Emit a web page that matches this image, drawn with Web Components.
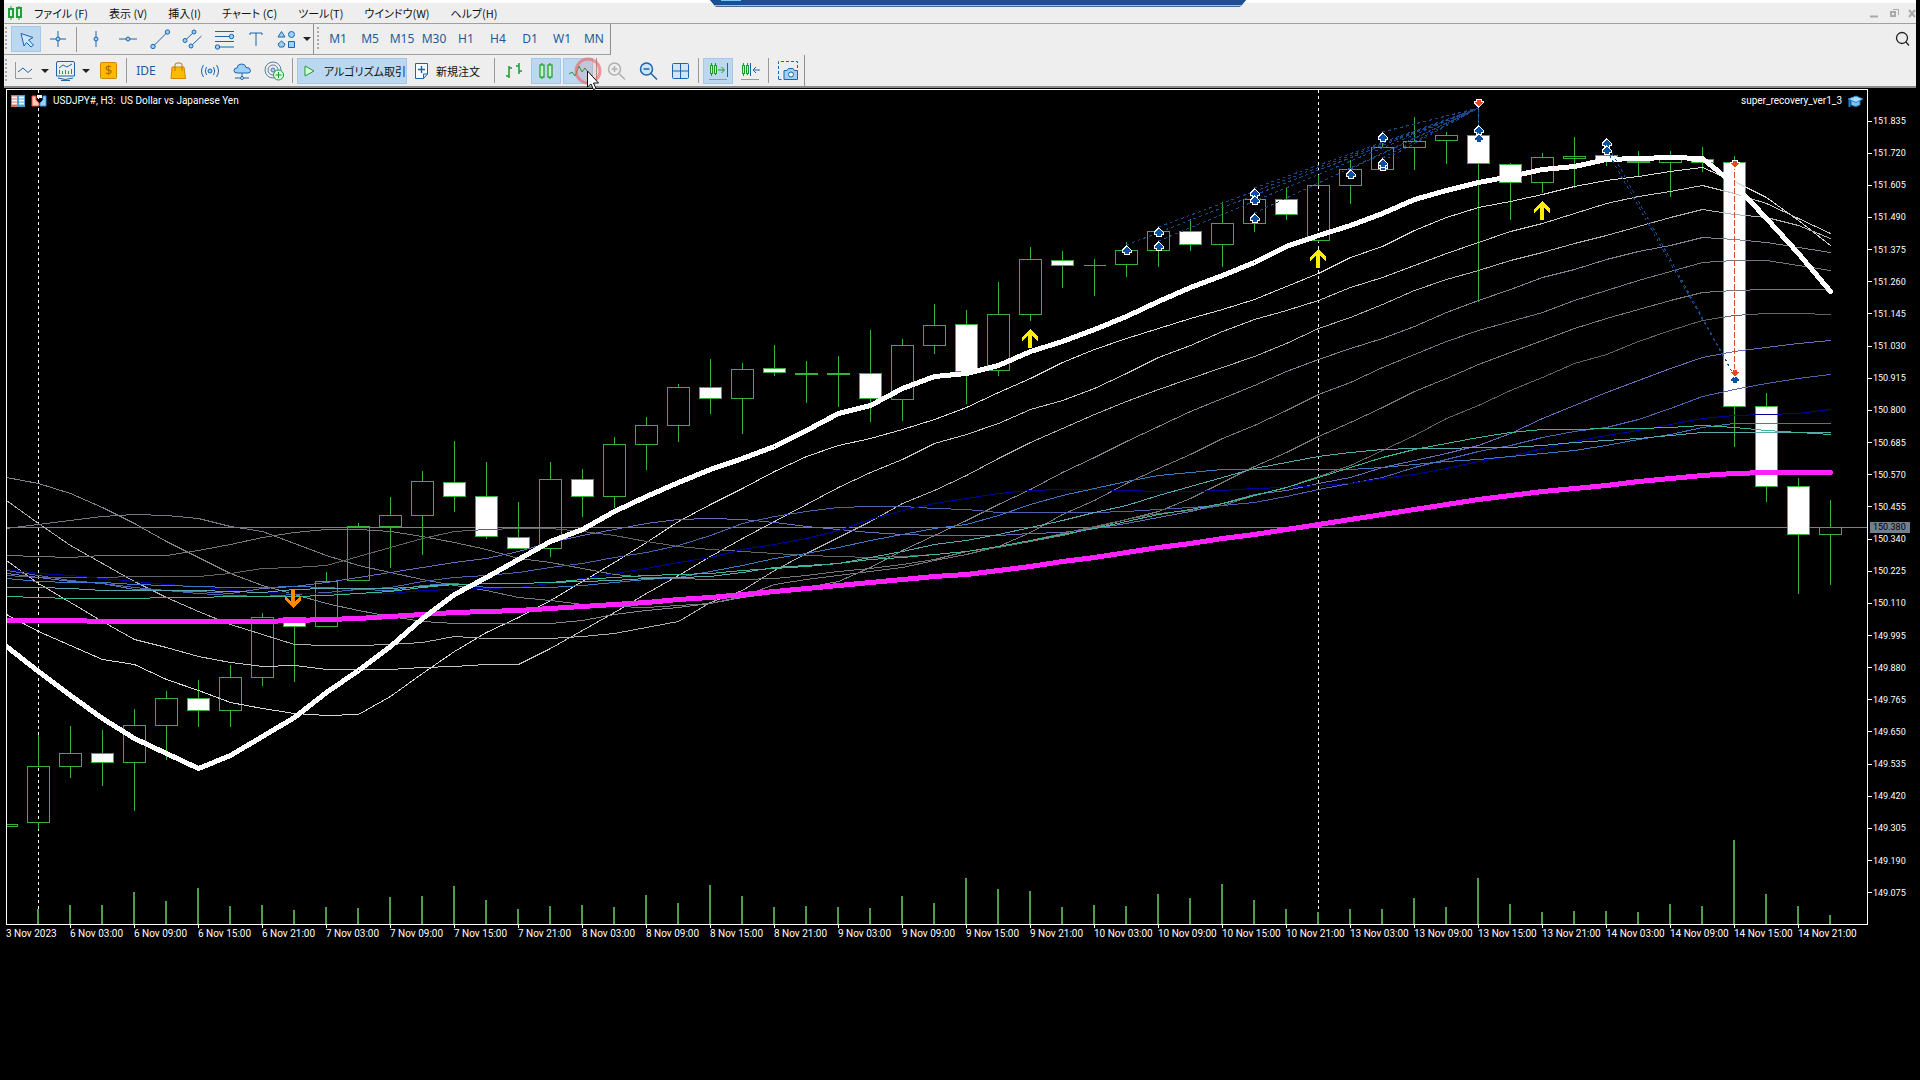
<!DOCTYPE html>
<html lang="ja">
<head>
    <meta charset="utf-8">
    <title>USDJPY#, H3</title>
    <meta name="viewport" content="width=device-width, initial-scale=1">
    <style>
        body {
            margin: 0;
            background: #000;
            font-family: "Liberation Sans", "Noto Sans CJK JP", sans-serif;
            font-size: 11px;
        }
        main {
            padding: 0 4px;
        }
    </style>
</head>

<body>
    <template id="menu-bar">
        <style>
            :host {
                display: flex;
                align-items: center;
                height: 20px;
                border-top: 3px solid #fff;
                border-bottom: 1px solid #a0a0a0;
                background: #eee;
                color: #111;
            }
            nav {
                display: flex;
                flex: 1;
                gap: 21px;
                margin-left: 12px;
            }
            button {
                padding: 0;
                border: 0;
                background: none;
                color: inherit;
                font: 11px/18px "Noto Sans CJK JP", sans-serif;
                font-feature-settings: "palt";
                white-space: pre;
            }
            svg {
                display: block;
            }
            .logo {
                margin-left: 4px;
            }
            .controls {
                display: flex;
                gap: 8px;
            }
        </style>
        <svg class="logo" width="14" height="16" viewBox="0 0 14 16" fill="none" stroke="#1fa03a" stroke-width="2">
            <path d="M3 1V4M3 12V15M11 1V3M11 12V15" stroke-width="1"/>
            <rect x="1" y="4" width="4" height="8"/>
            <rect x="9" y="3" width="4" height="9"/>
        </svg>
        <nav></nav>
        <div class="controls">
            <button aria-label="最小化"><svg width="12" height="12"><path d="M2 9.5H10" stroke="#aaa" stroke-width="2"/></svg></button>
            <button aria-label="元に戻す"><svg width="12" height="12" fill="none" stroke="#aaa"><rect x="3" y="5" width="4" height="4" stroke-width="2"/><path d="M5 2.5H10.5V8"/></svg></button>
            <button aria-label="閉じる"><svg width="8" height="12" fill="none" stroke="#aaa" stroke-width="2"><path d="M1 3L7 10M7 3L1 10"/></svg></button>
        </div>
    </template>

    <template id="tool-bar">
        <style>
            :host {
                display: flex;
                align-items: stretch;
                height: 31px;
                background: #eee;
            }
            :host([last]) {
                border-bottom: 2px solid #8a8a8a;
            }
            ::slotted(.end) {
                margin-left: auto;
                padding-top: 2px;
            }
        </style>
        <slot></slot>
    </template>

    <template id="tool-group">
        <style>
            :host {
                display: flex;
                align-items: center;
                box-sizing: border-box;
                border-right: 1px solid #909090;
                border-bottom: 1px solid #a0a0a0;
            }
            :host([flat]) {
                border-bottom: 0;
            }
            .grip {
                width: 2px;
                height: 24px;
                margin: 0 3px 0 1px;
                background: repeating-linear-gradient(#aaa 0 2px, transparent 2px 4px);
            }
            :host([wide]) .grip {
                margin: 0 3px;
            }
        </style>
        <div class="grip"></div>
        <slot></slot>
    </template>

    <template id="tool-button">
        <style>
            :host {
                display: block;
            }
            button {
                display: flex;
                align-items: center;
                justify-content: center;
                box-sizing: border-box;
                min-width: 30px;
                height: 26px;
                margin: 0 1px;
                padding: 0;
                border: 1px solid transparent;
                background: none;
                color: #1c5a9c;
                font: 12px/16px "Noto Sans", sans-serif;
            }
            button[aria-pressed="true"] {
                border-color: #a2c9ec;
                background: #bbd8f0;
            }
            :host([wide]) button {
                justify-content: flex-start;
                min-width: 82px;
                color: #111;
                font: 11px/16px "Noto Sans CJK JP", sans-serif;
                font-feature-settings: "palt";
            }
            :host([wide]) button svg {
                margin-right: 2px;
            }
            svg {
                display: block;
                flex: none;
            }
            .caret {
                display: none;
                width: 0;
                margin-left: 5px;
                border: 4px solid transparent;
                border-top: 4px solid #222;
                border-bottom: 0;
            }
            :host([menu]) .caret {
                display: block;
            }
        </style>
        <button><slot></slot><span class="caret"></span></button>
    </template>

    <template id="tool-separator">
        <style>
            :host {
                width: 1px;
                height: 25px;
                margin: 0 3px 0 2px;
                background: #999;
            }
        </style>
    </template>

    <template id="price-chart">
        <style>
            :host {
                display: grid;
                grid-template-columns: 1fr 48px;
                margin: 1px 0 0 2px;
                color: #fff;
                font: 10px/16px Roboto, sans-serif;
            }
            .plot {
                display: grid;
                border: 1px solid #fff;
            }
            .plot > * {
                grid-area: 1 / 1;
            }
            .canvas {
                display: block;
                width: 100%;
            }
            header {
                display: flex;
                align-items: center;
                align-self: start;
                gap: 6px;
                height: 22px;
                padding: 0 4px;
                z-index: 1;
            }
            header .expert {
                margin-left: auto;
            }
            header svg {
                display: block;
            }
            .prices {
                position: relative;
                display: flex;
                flex-direction: column;
                justify-content: space-between;
                padding: 24px 0;
                font-size: 9px;
            }
            .prices span {
                display: flex;
                align-items: center;
                gap: 1px;
            }
            .prices span::before {
                content: "";
                width: 4px;
                height: 1px;
                background: #fff;
            }
            .prices output {
                position: absolute;
                top: calc(52% - 2px);
                left: 2px;
                padding: 0 4px 0 3px;
                background: #708090;
                color: #000;
                line-height: 11px;
            }
            .times {
                display: grid;
                grid-auto-flow: column;
                grid-auto-columns: 1fr;
                padding-right: 6px;
                white-space: nowrap;
            }
            .times span::before {
                content: "";
                display: block;
                width: 1px;
                height: 3px;
                margin-bottom: -2px;
                background: #fff;
            }
            .times span:first-child::before {
                background: none;
            }
        </style>
        <div class="plot">
            <svg class="canvas" viewBox="7 90 1860 834" fill="none" shape-rendering="crispEdges"></svg>
            <header>
                <svg width="14" height="12"><path d="M0 0H7V12H0z" fill="#e06a5a"/><path d="M7 0H14V12H7z" fill="#4aa0e0"/><path d="M1 2.5H6M1 5.5H6M1 8.5H6M8 2.5H13M8 5.5H13M8 8.5H13" stroke="#fff" stroke-width="2"/></svg>
                <svg width="16" height="12"><path d="M1 1H5V5L8 8V11H1z" fill="#ffc8b8" stroke="#e0503a"/><path d="M15 1H12V5L9 8V11H15z" fill="#9cd4ff" stroke="#3a90d8"/><path d="M6 0H11V3H6z" fill="#fff"/></svg>
                <span class="symbol"></span>
                <span class="expert"></span>
                <svg width="15" height="13"><path d="M3 5V10Q8 13 12 10V5" fill="#7cc4f4" stroke="#1c6cb0"/><path d="M0 4L8 1L15 4L8 7.500z" fill="#a8dcff" stroke="#2a80c8"/><path d="M1.500 5V12" stroke="#2a80c8" stroke-width="2"/></svg>
            </header>
        </div>
        <div class="prices"></div>
        <div class="times"></div>
    </template>

    <template id="session-tab">
        <style>
            :host {
                position: absolute;
                top: 0;
                left: 710px;
                width: 536px;
                height: 7px;
                background: #4a6a90;
                clip-path: polygon(0 0, 100% 0, calc(100% - 6px) 100%, 6px 100%);
            }
            div {
                height: 5px;
                border-bottom: 1px solid #a8bcd4;
                background: #1b4f92;
            }
            i {
                display: block;
                width: 20px;
                height: 1px;
                margin-left: 11px;
                background: #7cc4f4;
            }
        </style>
        <div><i></i></div>
    </template>

    <template id="click-pointer">
        <style>
            :host {
                position: absolute;
                top: 57px;
                left: 574px;
                pointer-events: none;
            }
            svg {
                display: block;
            }
        </style>
        <svg width="30" height="34" viewBox="0 0 30 34">
            <circle cx="14" cy="14" r="12" fill="#f0505022" stroke="#f0606099" stroke-width="3"/>
            <path d="M13.500 14V30L17 27L19.500 32.500L22 31.500L19.500 26H24.500z" fill="#fff" stroke="#111"/>
        </svg>
    </template>

    <main>
        <menu-bar items="ファイル (F)|表示 (V)|挿入(I)|チャート (C)|ツール(T)|ウインドウ(W)|ヘルプ(H)"></menu-bar>
        <tool-bar>
            <tool-group>
                <tool-button icon="cursor" label="カーソル" pressed></tool-button>
                <tool-button icon="crosshair" label="クロスヘア"></tool-button>
                <tool-separator></tool-separator>
                <tool-button icon="vline" label="垂直線"></tool-button>
                <tool-button icon="hline" label="水平線"></tool-button>
                <tool-button icon="trend" label="トレンドライン"></tool-button>
                <tool-button icon="channel" label="チャネル"></tool-button>
                <tool-button icon="fibo" label="フィボナッチ"></tool-button>
                <tool-button icon="text" label="テキスト"></tool-button>
                <tool-button icon="shapes" label="図形" menu></tool-button>
            </tool-group>
            <tool-group wide>
                <tool-button>M1</tool-button>
                <tool-button>M5</tool-button>
                <tool-button>M15</tool-button>
                <tool-button>M30</tool-button>
                <tool-button>H1</tool-button>
                <tool-button>H4</tool-button>
                <tool-button>D1</tool-button>
                <tool-button>W1</tool-button>
                <tool-button>MN</tool-button>
            </tool-group>
            <tool-button class="end" icon="search" label="検索"></tool-button>
        </tool-bar>
        <tool-bar last>
            <tool-group flat>
                <tool-button icon="line" label="チャート" menu></tool-button>
                <tool-button icon="template" label="テンプレート" menu></tool-button>
                <tool-button icon="dollar" label="気配値"></tool-button>
                <tool-separator></tool-separator>
                <tool-button>IDE</tool-button>
                <tool-button icon="bag" label="マーケット"></tool-button>
                <tool-button icon="signal" label="シグナル"></tool-button>
                <tool-button icon="cloud" label="クラウド"></tool-button>
                <tool-button icon="vps" label="VPS"></tool-button>
                <tool-separator></tool-separator>
                <tool-button icon="play" wide pressed>アルゴリズム取引</tool-button>
                <tool-button icon="order" wide>新規注文</tool-button>
                <tool-separator></tool-separator>
                <tool-button icon="bars" label="バーチャート"></tool-button>
                <tool-button icon="candles" label="ローソク足" pressed></tool-button>
                <tool-button icon="zigzag" label="ラインチャート" pressed></tool-button>
                <tool-separator></tool-separator>
                <tool-button icon="zoomin" label="拡大"></tool-button>
                <tool-button icon="zoomout" label="縮小"></tool-button>
                <tool-button icon="tiles" label="並べて表示"></tool-button>
                <tool-separator></tool-separator>
                <tool-button icon="scroll" label="自動スクロール" pressed></tool-button>
                <tool-button icon="shift" label="チャートシフト"></tool-button>
                <tool-separator></tool-separator>
                <tool-button icon="camera" label="スクリーンショット"></tool-button>
            </tool-group>
        </tool-bar>
        <price-chart symbol="USDJPY#, H3:&nbsp; US Dollar vs Japanese Yen" expert="super_recovery_ver1_3"></price-chart>
    </main>
    <session-tab></session-tab>
    <click-pointer></click-pointer>

    <script>
        // 24x24 toolbar icons, blue outline unless a shape says otherwise
        const ICONS = {
            cursor: '<path d="M7 6.500L19 10.500L14.500 13L19.500 18L17 20L12.500 15.500L10 19z" fill="#cfe6fa"/>',
            crosshair: '<path d="M12 4V20M4 12H20"/><circle cx="12" cy="12" r="2" fill="#9fd0f8"/>',
            vline: '<path d="M12 4V20"/><circle cx="12" cy="12" r="2" fill="#9fd0f8"/>',
            hline: '<path d="M3 12H21"/><circle cx="12" cy="12" r="2" fill="#9fd0f8"/>',
            trend: '<path d="M5 19.500L19.500 5"/><circle cx="5" cy="19.500" r="2.200" fill="#9fd0f8"/><circle cx="19.500" cy="5" r="2.200" fill="#9fd0f8"/>',
            channel: '<path d="M5 13.500L14 5M11 19L21.500 9"/><circle cx="5" cy="13.500" r="2" fill="#9fd0f8"/><circle cx="14" cy="5" r="2" fill="#9fd0f8"/><circle cx="11" cy="19" r="2" fill="#9fd0f8"/>',
            fibo: '<path d="M3 4.500H22M3 9.500H22M3 14.500H22M3 20H22"/><circle cx="19.500" cy="9.500" r="2.200" fill="#9fd0f8"/><circle cx="5.500" cy="20" r="2.200" fill="#9fd0f8"/>',
            text: '<path d="M6 8V6H18V8M12 6V19"/>',
            shapes: '<g fill="#9fd0f8"><path d="M7.500 4.500L11 10H4z"/><circle cx="17.500" cy="7.500" r="3"/><path d="M7.500 14L11 17L9.500 20H5.500L4 17z"/><path d="M14.500 14.500H20.500V20.500H14.500z"/></g>',
            search: '<g stroke="#222" stroke-width="1.300"><circle cx="14" cy="11" r="5.500"/><path d="M18 15L21 18.500"/></g>',
            line: '<path d="M3.500 3V19.500H20" stroke="#999"/><path d="M6 13L11 9L16 13.500L20 10"/>',
            template: '<path d="M3.500 17V4Q3.500 2.500 5 2.500H20Q21.500 2.500 21.500 4V17zM5 19Q12 22 20 19M8 21.500H17"/><path d="M6 9L10 6L14 8L19 5"/><path d="M6.500 11V15M9.500 12V15M12.500 11V15M15.500 12V15M18.500 10V15" stroke="#2a9a4a"/>',
            dollar: '<rect x="4.500" y="3.500" width="16" height="16" rx="1" fill="#ffb900" stroke="#cf8800"/><text x="12.500" y="16" text-anchor="middle" font-size="13" fill="#a86c00" stroke="none">$</text>',
            bag: '<path d="M6 8H18L19.500 19.500H5z" fill="#ffb900" stroke="#cf8800"/><path d="M9 12V6Q9 4 11 4H14Q16 4 16 6V12" stroke="#b87800"/>',
            signal: '<circle cx="12" cy="12" r="2" fill="#9fd0f8"/><path d="M8.500 8Q6 12 8.500 16M15.500 8Q18 12 15.500 16M5.500 6Q1.500 12 5.500 18M18.500 6Q22.500 12 18.500 18"/>',
            cloud: '<path d="M7 14Q4 14 4 11.500Q4 9 7 9Q7.500 5 11.500 5Q15.500 5 16 8.500Q20 8 20.500 11.500Q20.500 14 18 14z" fill="#9fd0f8"/><path d="M12 14V18M5 19H10M14 19H19"/><circle cx="12" cy="19" r="1.500"/>',
            vps: '<g stroke="#5580a8"><circle cx="11" cy="11" r="8"/><circle cx="11" cy="11" r="5"/><circle cx="11" cy="11" r="2" fill="#9fd0f8"/></g><circle cx="16.500" cy="16" r="5" fill="#d8ffd8" stroke="#1f9a3a"/><path d="M16.500 13V19M13.500 16H19.500" stroke="#1f9a3a"/>',
            play: '<path d="M7 7L16 12L7 17z" fill="#d8ffd8" stroke="#1f9a3a"/>',
            order: '<path d="M5.500 4.500H17.500V15L13.500 19.500H5.500zM17.500 15H13.500V19.500" fill="#fff"/><path d="M11.500 7V14M8 10.500H15" stroke-width="1.500"/>',
            bars: '<g stroke="#1f9a2a" stroke-width="1.500"><path d="M7 7V19M4 17H7M7 9H10M17 4V15M14 7H17M17 12H20"/></g>',
            candles: '<g stroke="#1f9a2a" stroke-width="1.200" fill="#c8f8c8"><path d="M8 4V20M16 4V20"/><rect x="6" y="6" width="4" height="12"/><rect x="14" y="6" width="4" height="12"/></g>',
            zigzag: '<path d="M3 15L6 13L9 17L13 7L16 13L19 9L21 12" stroke="#1f9a3a"/>',
            zoomin: '<g stroke="#b0b0b0" stroke-width="1.500"><circle cx="10.500" cy="10" r="6"/><path d="M15 14.500L21 20.500M7.500 10H13.500M10.500 7V13"/></g>',
            zoomout: '<g stroke-width="1.500"><circle cx="10.500" cy="10" r="6" fill="#cfe6fa"/><path d="M15 14.500L21 20.500M7.500 10H13.500"/></g>',
            tiles: '<rect x="4.500" y="4.500" width="16" height="15" rx="1" fill="#cfe6fa"/><path d="M12.500 4.500V19.500M4.500 12H20.500"/>',
            scroll: '<g stroke="#1f9a2a" fill="#c8f8c8"><path d="M5.500 4V17M9.500 4V16"/><rect x="4.500" y="6.500" width="2" height="8"/><rect x="8.500" y="6.500" width="2" height="8"/><path d="M12 11H18M15.500 8L18.500 11L15.500 14" fill="none"/></g><path d="M21.500 4V18"/><path d="M3 20.500H21" stroke="#999"/>',
            shift: '<g stroke="#1f9a2a" fill="#c8f8c8"><path d="M5.500 4V17M9.500 4V16"/><rect x="4.500" y="6.500" width="2" height="8"/><rect x="8.500" y="6.500" width="2" height="8"/></g><path d="M12.500 4V17M15 11H22M18 8L15 11L18 14"/><path d="M3 20.500H21" stroke="#999"/>',
            camera: '<path d="M2.500 20V2.500H21.500V9M2.500 20.500H7" stroke-dasharray="3 2"/><path d="M8 11.500H11L12.500 9.500H17L18.500 11.500H21.500V20.500H8z" fill="#9fd0f8"/><circle cx="15" cy="15.500" r="2.500" fill="#fff"/>'
        };

        // x of the first bar that is fully on screen, and the distance between bars
        const FIRST_X = 38;
        const STEP = 32;
        const BASE_Y = 924;

        // high, body top, body bottom, low, falling
        const CANDLES = [
            [735, 766, 822, 828, 0], [726, 753, 766, 777, 0], [730, 753, 762, 785, 1], [709, 725, 762, 810, 0],
            [691, 698, 725, 759, 0], [680, 698, 710, 726, 1], [665, 677, 710, 726, 0], [613, 617, 677, 685, 0],
            [617, 617, 626, 681, 1], [572, 581, 626, 626, 0], [523, 526, 580, 580, 0], [497, 515, 526, 567, 0],
            [471, 481, 515, 554, 0], [441, 482, 496, 511, 1], [462, 496, 536, 538, 1], [502, 537, 548, 548, 1],
            [462, 479, 548, 556, 0], [469, 479, 496, 516, 1], [437, 444, 496, 507, 0], [417, 425, 444, 469, 0],
            [384, 387, 425, 441, 0], [359, 387, 398, 413, 1], [363, 369, 398, 433, 0], [345, 368, 372, 375, 1],
            [361, 373, 374, 402, 0], [356, 373, 374, 406, 0], [330, 373, 398, 421, 1], [339, 345, 399, 420, 0],
            [304, 325, 345, 353, 0], [310, 324, 371, 403, 1], [282, 314, 370, 375, 0], [247, 259, 314, 320, 0],
            [251, 260, 265, 287, 1], [259, 265, 265, 295, 0], [242, 250, 264, 276, 0], [230, 231, 250, 266, 0],
            [219, 231, 244, 250, 1], [202, 223, 244, 266, 0], [190, 199, 223, 231, 0], [188, 199, 214, 219, 1],
            [175, 185, 240, 241, 0], [160, 169, 185, 203, 0], [143, 147, 169, 170, 0], [117, 141, 147, 169, 0],
            [132, 135, 140, 163, 0], [107, 135, 163, 301, 1], [163, 164, 182, 219, 1], [153, 157, 182, 192, 0],
            [137, 156, 158, 187, 0], [143, 155, 161, 165, 1], [151, 161, 162, 176, 0], [151, 159, 162, 196, 0],
            [147, 159, 162, 171, 1], [156, 162, 406, 446, 1], [393, 406, 486, 501, 1], [478, 486, 534, 593, 1],
            [500, 527, 534, 584, 0]
        ];

        const VOLUMES = [
            909, 905, 905, 892, 901, 888, 906, 905, 910, 907, 908, 897, 896, 886, 900, 909, 906, 905, 907, 895,
            903, 885, 896, 907, 906, 907, 908, 896, 903, 878, 889, 891, 907, 905, 906, 894, 898, 884, 900, 909,
            912, 909, 909, 898, 907, 878, 904, 912, 911, 911, 912, 904, 906, 840, 894, 906, 915
        ];

        // one y for each bar, starting one bar to the left of FIRST_X
        const AVERAGES = [
            ['#d8d8d8', 1, [614, 631, 645, 659, 664, 679, 690, 702, 708, 713, 715, 714, 696, 673, 651, 632, 617, 600, 581, 562, 542, 521, 504, 488, 471, 456, 445, 438, 429, 419, 407, 392, 378, 362, 349, 338, 328, 318, 309, 299, 286, 273, 257, 246, 230, 217, 207, 201, 194, 186, 180, 176, 171, 167, 181, 197, 220, 245]],
            ['#c4c4c4', 1, [560, 583, 602, 621, 639, 647, 656, 662, 666, 665, 669, 669, 669, 667, 666, 664, 664, 648, 630, 612, 593, 575, 556, 538, 521, 504, 487, 472, 459, 443, 434, 423, 409, 400, 388, 373, 357, 345, 331, 319, 310, 300, 287, 277, 265, 253, 242, 231, 223, 213, 203, 196, 191, 185, 193, 203, 218, 233]],
            ['#b0b0b0', 1, [500, 523, 545, 563, 581, 597, 611, 624, 634, 644, 645, 645, 644, 642, 636, 638, 638, 638, 636, 633, 627, 621, 602, 590, 570, 553, 537, 521, 503, 490, 475, 458, 442, 428, 414, 401, 389, 378, 367, 356, 343, 328, 317, 304, 290, 279, 270, 260, 252, 243, 235, 226, 217, 209, 214, 217, 225, 238]],
            ['#80858c', 1, [477, 483, 493, 507, 523, 541, 557, 573, 585, 594, 603, 610, 616, 621, 623, 623, 623, 623, 620, 614, 610, 607, 603, 597, 593, 587, 581, 567, 550, 535, 520, 504, 489, 472, 457, 441, 426, 411, 398, 385, 371, 359, 348, 338, 326, 312, 300, 289, 277, 269, 259, 251, 245, 237, 239, 242, 247, 252]],
            ['#747a80', 1, [528, 524, 520, 516, 514, 515, 518, 526, 531, 543, 555, 565, 572, 579, 585, 590, 597, 600, 604, 606, 607, 605, 603, 596, 584, 579, 575, 571, 567, 560, 554, 546, 532, 514, 500, 483, 468, 454, 438, 425, 410, 394, 382, 367, 354, 341, 330, 321, 312, 300, 290, 280, 271, 262, 260, 260, 265, 270]],
            ['#787878', 1, [555, 556, 557, 555, 555, 555, 550, 544, 537, 532, 529, 529, 531, 536, 542, 549, 558, 562, 568, 574, 577, 578, 579, 579, 578, 575, 571, 568, 564, 559, 551, 547, 541, 535, 527, 519, 511, 498, 482, 466, 452, 436, 422, 407, 391, 378, 364, 352, 340, 328, 318, 309, 300, 292, 290, 289, 289, 289]],
            ['#646464', 1, [575, 577, 577, 577, 576, 576, 576, 573, 568, 567, 565, 556, 547, 538, 531, 529, 528, 528, 531, 535, 541, 546, 549, 551, 553, 555, 556, 557, 556, 554, 551, 547, 540, 533, 526, 519, 513, 510, 505, 495, 487, 476, 465, 450, 435, 418, 405, 390, 377, 363, 354, 341, 330, 320, 315, 313, 313, 314]],
            ['#6a6ab8', 1, [573, 577, 581, 583, 589, 590, 591, 593, 588, 586, 582, 577, 572, 567, 562, 558, 551, 542, 535, 529, 523, 519, 518, 519, 522, 526, 529, 532, 534, 535, 535, 535, 533, 532, 528, 523, 517, 511, 503, 494, 490, 483, 477, 467, 460, 453, 445, 433, 418, 405, 392, 380, 368, 357, 351, 347, 343, 340]],
            ['#4a62b0', 1, [570, 575, 580, 583, 587, 590, 593, 595, 596, 594, 592, 589, 587, 581, 577, 575, 572, 567, 563, 557, 552, 545, 535, 523, 516, 511, 507, 506, 506, 508, 509, 512, 512, 512, 512, 511, 509, 507, 505, 502, 496, 489, 483, 477, 467, 459, 451, 445, 437, 431, 427, 419, 408, 396, 389, 383, 378, 374]],
            ['#0000a0', 1, [569, 573, 575, 578, 581, 584, 586, 590, 592, 593, 593, 593, 593, 590, 589, 588, 587, 583, 578, 573, 568, 562, 557, 549, 544, 538, 530, 519, 510, 503, 498, 493, 490, 489, 489, 490, 491, 491, 490, 488, 487, 485, 483, 478, 474, 468, 461, 456, 448, 441, 435, 430, 424, 418, 415, 414, 413, 409]],
            ['#3c78c4', 1, [578, 581, 582, 582, 584, 585, 586, 587, 587, 586, 587, 589, 590, 585, 583, 587, 587, 587, 585, 582, 579, 577, 571, 565, 558, 553, 547, 540, 534, 528, 524, 515, 504, 495, 488, 481, 475, 472, 469, 469, 469, 469, 469, 467, 464, 461, 459, 456, 453, 450, 445, 439, 434, 427, 423, 423, 423, 423]],
            ['#5aa8b0', 1, [587, 587, 588, 590, 590, 590, 590, 591, 592, 589, 588, 588, 588, 586, 584, 583, 583, 582, 581, 580, 578, 577, 576, 572, 567, 565, 563, 557, 551, 544, 540, 534, 527, 520, 512, 505, 495, 486, 477, 468, 462, 456, 452, 449, 448, 448, 447, 447, 445, 442, 440, 438, 435, 432, 432, 432, 432, 432]],
            ['#38b894', 1, [596, 597, 598, 598, 598, 597, 597, 596, 596, 596, 595, 593, 591, 587, 584, 583, 583, 582, 579, 577, 575, 574, 573, 570, 568, 566, 563, 559, 557, 554, 551, 546, 540, 534, 528, 521, 514, 509, 503, 495, 487, 477, 467, 457, 449, 443, 437, 432, 429, 429, 428, 428, 427, 425, 427, 430, 432, 434]],
            ['#ff20ff', 5, [620, 620, 620, 621, 621, 621, 621, 621, 621, 620, 619, 618, 616, 614, 612, 611, 610, 608, 606, 604, 602, 599, 597, 594, 591, 588, 585, 582, 579, 576, 574, 570, 566, 561, 557, 552, 547, 543, 538, 534, 529, 524, 519, 514, 509, 504, 499, 495, 491, 488, 485, 481, 478, 475, 473, 472, 472, 472]],
            ['#ffffff', 5, [646, 671, 695, 718, 738, 753, 768, 755, 736, 717, 692, 670, 646, 618, 594, 577, 559, 541, 529, 511, 496, 482, 469, 458, 446, 430, 413, 405, 388, 376, 373, 365, 351, 341, 329, 316, 301, 287, 275, 262, 246, 235, 225, 213, 199, 190, 182, 176, 169, 166, 159, 158, 157, 158, 184, 218, 253, 291]]
        ];

        const BUYS = [
            [1126, 250], [1158, 232], [1158, 246], [1254, 193], [1254, 200], [1254, 218], [1350, 174],
            [1382, 137], [1382, 166], [1382, 163], [1478, 130], [1478, 138], [1606, 143], [1606, 150], [1734, 379]
        ];
        const SELLS = [[1478, 102], [1734, 163], [1734, 372]];
        const SIGNALS = [[293, 608, 1], [1030, 329, 0], [1318, 249, 0], [1542, 201, 0]];

        const DATES = [
            '3 Nov 2023', '6 Nov 03:00', '6 Nov 09:00', '6 Nov 15:00', '6 Nov 21:00', '7 Nov 03:00', '7 Nov 09:00',
            '7 Nov 15:00', '7 Nov 21:00', '8 Nov 03:00', '8 Nov 09:00', '8 Nov 15:00', '8 Nov 21:00', '9 Nov 03:00',
            '9 Nov 09:00', '9 Nov 15:00', '9 Nov 21:00', '10 Nov 03:00', '10 Nov 09:00', '10 Nov 15:00',
            '10 Nov 21:00', '13 Nov 03:00', '13 Nov 09:00', '13 Nov 15:00', '13 Nov 21:00', '14 Nov 03:00',
            '14 Nov 09:00', '14 Nov 15:00', '14 Nov 21:00'
        ];

        class TemplateElement extends HTMLElement {
            constructor() {
                super();
                this.attachShadow({ mode: 'open' });
                const template = document.querySelector(`template#${this.localName}`);
                this.shadowRoot.appendChild(template.content.cloneNode(true));
            }
        }

        class MenuBar extends TemplateElement {
            connectedCallback() {
                this.shadowRoot.querySelector('nav').innerHTML = this.getAttribute('items')
                    .split('|')
                    .map(item => `<button>${item}</button>`)
                    .join('');
            }
        }

        class ToolButton extends TemplateElement {
            connectedCallback() {
                const button = this.shadowRoot.querySelector('button');
                const icon = ICONS[this.getAttribute('icon')];
                if (icon) {
                    button.insertAdjacentHTML('afterbegin',
                        `<svg width="24" height="24" viewBox="0 0 24 24" fill="none" stroke="#1c64ac">${icon}</svg>`);
                }
                if (this.hasAttribute('label')) button.setAttribute('aria-label', this.getAttribute('label'));
                if (this.hasAttribute('pressed')) button.setAttribute('aria-pressed', 'true');
            }
        }

        class PriceChart extends TemplateElement {
            connectedCallback() {
                const root = this.shadowRoot;
                root.querySelector('.symbol').textContent = this.getAttribute('symbol');
                root.querySelector('.expert').textContent = this.getAttribute('expert');
                root.querySelector('.canvas').innerHTML = [
                    this.grid(), this.volumes(), this.candles(), this.averages(), this.trades(), this.signals()
                ].join('');

                let prices = '';
                for (let i = 0; i < 25; i++) {
                    prices += `<span>${(151.835 - i * 0.115).toFixed(3)}</span>`;
                }
                root.querySelector('.prices').innerHTML = prices + '<output>150.380</output>';
                root.querySelector('.times').innerHTML = DATES.map(date => `<span>${date}</span>`).join('');
            }

            grid() {
                return `<path d="M38.500 90V924M1318.500 90V924" stroke="#fff" stroke-dasharray="3 3"/>
                    <path d="M7 527.500H1867" stroke="#808080"/>`;
            }

            volumes() {
                return VOLUMES.map((y, i) => {
                    const x = FIRST_X + i * STEP;
                    return `<path d="M${x} ${BASE_Y}V${y}" stroke="#4f9c4f" stroke-width="2"/>`;
                }).join('');
            }

            candles() {
                // the extra H stroke keeps a bar visible when its body has no height
                const bars = CANDLES.map(([high, top, bottom, low, falling], i) => {
                    const x = FIRST_X + i * STEP + 0.5;
                    return `<path d="M${x} ${high}V${top}M${x} ${bottom}V${low + 1}M${x - 11} ${top + 0.5}H${x + 11}"/>
                        <rect x="${x - 11}" y="${top + 0.5}" width="22" height="${bottom - top}" fill="${falling ? '#fff' : 'none'}"/>`;
                });
                return `<g stroke="#38b03c"><path d="M7 824.500H17.500V826.500H7"/>${bars.join('')}</g>`;
            }

            averages() {
                return AVERAGES.map(([colour, width, ys]) => {
                    const points = ys.map((y, i) => `${FIRST_X + (i - 1) * STEP + 0.5},${y + 0.5}`).join(' ');
                    return `<polyline points="${points}" stroke="${colour}" stroke-width="${width}" stroke-linejoin="round" stroke-linecap="round"/>`;
                }).join('');
            }

            trades() {
                // dashed links run from each entry to its exit
                const links = BUYS.slice(0, 12).map(([x, y]) => `M${x + 0.5} ${y - 5}L1478.500 108`).join('');
                const arrow = (x, y, turn, colour) =>
                    `<path transform="translate(${x + 0.5} ${y + 0.5}) rotate(${turn})" d="M0 -4L4 0V1H2V3H-2V1H-4V0z" fill="${colour}" stroke="#fff" stroke-width="2" paint-order="stroke"/>`;
                return `<path d="${links}" stroke="#184a88" stroke-dasharray="3 3"/>
                    <path d="M1606.500 143L1734.500 376M1606.500 150L1734.500 376" stroke="#184a88" stroke-dasharray="3 3"/>
                    <path d="M1734.500 164V372" stroke="#d05030" stroke-dasharray="6 2"/>
                    ${BUYS.map(([x, y]) => arrow(x, y, 0, '#0a50a0')).join('')}
                    ${SELLS.map(([x, y]) => arrow(x, y, 180, '#e84818')).join('')}`;
            }

            signals() {
                return SIGNALS.map(([x, y, down]) =>
                    `<path transform="translate(${x} ${y}) rotate(${down ? 180 : 0})" d="M0 0L8 8V12L2 7V19H-2V7L-8 12V8z" fill="${down ? '#ff8c00' : '#ffee00'}"/>`
                ).join('');
            }
        }

        customElements.define('menu-bar', MenuBar);
        customElements.define('tool-bar', class extends TemplateElement {});
        customElements.define('tool-group', class extends TemplateElement {});
        customElements.define('tool-button', ToolButton);
        customElements.define('tool-separator', class extends TemplateElement {});
        customElements.define('price-chart', PriceChart);
        customElements.define('session-tab', class extends TemplateElement {});
        customElements.define('click-pointer', class extends TemplateElement {});
    </script>
</body>
</html>
